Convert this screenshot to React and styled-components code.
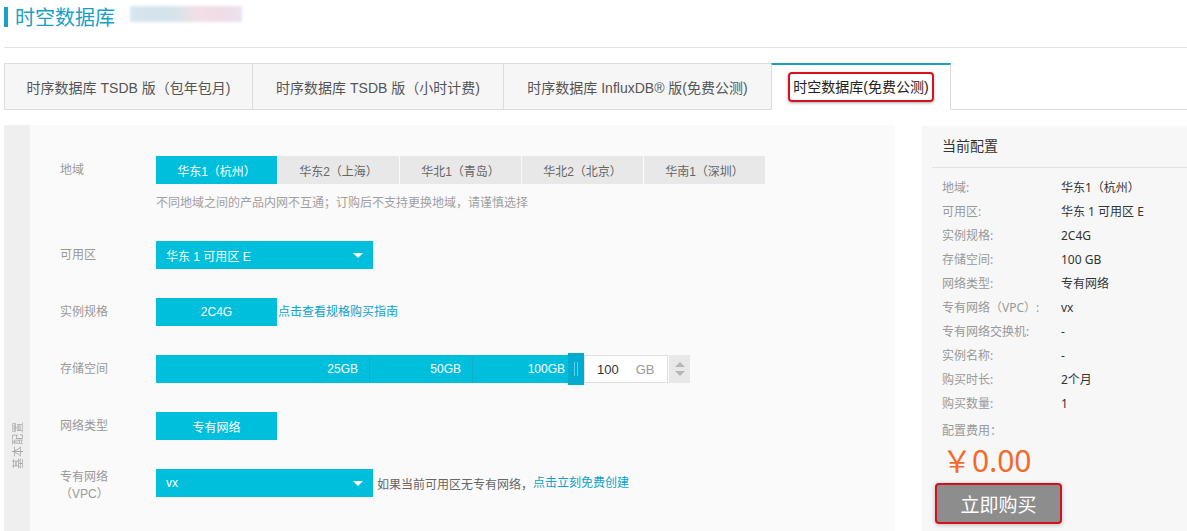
import React from 'react';
import styled, { createGlobalStyle } from 'styled-components';

const CYAN = '#00bfdc';
const TEAL = '#1a9fc6';
const LINK = '#0aa3cd';

const GlobalStyle = createGlobalStyle`
  html, body { margin: 0; padding: 0; background: #fff; }
  body {
    font-family: "Liberation Sans", "Noto Sans CJK SC", sans-serif;
    color: #333;
  }
  * { box-sizing: border-box; }
`;

const Page = styled.div`
  width: 1187px;
  height: 531px;
  overflow: hidden;
  padding-left: 4px;
`;

const Header = styled.div`
  height: 48px;
  border-bottom: 1px solid #e3e3e3;
  display: flex;
  align-items: flex-start;
  padding-top: 7px;
`;

const Title = styled.h1`
  margin: 0;
  font-size: 20px;
  font-weight: normal;
  line-height: 20px;
  color: ${TEAL};
  border-left: 4px solid ${TEAL};
  padding-left: 7px;
  font-family: "Noto Sans CJK SC", sans-serif;
`;

const Blurred = styled.div`
  width: 112px;
  height: 16px;
  margin: -1px 0 0 15px;
  background: linear-gradient(90deg, #d3e3ec 0%, #cfe0ea 30%, #d6e2e6 45%, #f2dbe4 60%, #efd9e3 80%, #e7e0ee 100%);
  filter: blur(1.5px);
  opacity: 0.9;
`;

const TabBar = styled.div`
  margin-top: 15px;
  height: 47px;
  display: flex;
  border-bottom: 1px solid #dcdcdc;
`;

const Tab = styled.div`
  width: ${p => p.$w}px;
  height: 47px;
  margin-left: ${p => (p.$first ? 0 : -1)}px;
  border: 1px solid #dcdcdc;
  border-top: ${p => (p.$active ? `2px solid ${TEAL}` : '1px solid #dcdcdc')};
  border-bottom: ${p => (p.$active ? '1px solid #fff' : '1px solid #dcdcdc')};
  background: ${p => (p.$active ? '#fff' : '#f6f6f6')};
  color: ${p => (p.$active ? '#222' : '#555')};
  font-size: 14px;
  display: flex;
  align-items: center;
  justify-content: center;
  position: relative;
  z-index: ${p => (p.$active ? 1 : 0)};
`;

const Marked = styled.span`
  border: 2px solid #d3121d;
  border-radius: 4px;
  padding: 4px 3px;
  line-height: 18px;
  box-shadow: 0 1px 3px rgba(0, 0, 0, 0.35);
`;

const Main = styled.div`
  margin-top: 15px;
  display: flex;
  align-items: flex-start;
  height: 406px;
`;

const LeftPanel = styled.div`
  width: 891px;
  height: 100%;
  display: flex;
  background: #fafafa;
`;

const Strip = styled.div`
  width: 26px;
  background: #efefef;
  display: flex;
  flex-direction: column;
  align-items: center;
  padding-top: 296px;
`;

const StripText = styled.span`
  writing-mode: vertical-rl;
  text-orientation: sideways;
  transform: rotate(180deg);
  font-size: 11px;
  letter-spacing: 1px;
  color: #a8a8a8;
  font-family: "Noto Sans CJK SC", sans-serif;
`;

const Form = styled.div`
  flex: 1;
  padding: 31px 0 0 30px;
  display: flex;
  flex-direction: column;
  gap: 29px;
`;

const Row = styled.div`
  display: flex;
  align-items: flex-start;
`;

const Label = styled.div`
  width: 96px;
  flex: none;
  font-size: 12px;
  color: #999;
  line-height: ${p => (p.$two ? '17px' : '28px')};
`;

const Control = styled.div`
  display: flex;
  flex-direction: column;
`;

const Inline = styled.div`
  display: flex;
  align-items: center;
  height: 28px;
`;

const Group = styled.div`
  display: flex;
  gap: 1px;
`;

const Choice = styled.div`
  width: ${p => p.$w || 121}px;
  height: 28px;
  display: flex;
  align-items: center;
  justify-content: center;
  font-size: 12px;
  background: ${p => (p.$active ? CYAN : '#e8e8e8')};
  color: ${p => (p.$active ? '#fff' : '#666')};
`;

const Hint = styled.div`
  margin-top: 10px;
  font-size: 12px;
  line-height: 18px;
  color: #a0a0a0;
`;

const Select = styled.div`
  width: 217px;
  height: 28px;
  background: ${CYAN};
  color: #fff;
  font-size: 12px;
  display: flex;
  align-items: center;
  justify-content: space-between;
  padding: 0 10px;
`;

const Caret = styled.span`
  width: 0;
  height: 0;
  border-left: 5px solid transparent;
  border-right: 5px solid transparent;
  border-top: 5px solid #fff;
`;

const Link = styled.span`
  font-size: 12px;
  color: ${LINK};
  line-height: 28px;
  margin-left: ${p => p.$ml || 0}px;
`;

const Note = styled.span`
  font-size: 12px;
  color: #666;
  margin-left: 4px;
`;

const Track = styled.div`
  display: flex;
  height: 28px;
  background: ${CYAN};
`;

const Segment = styled.div`
  width: ${p => p.$w}px;
  height: 100%;
  border-right: ${p => (p.$last ? 'none' : '1px solid #12abc9')};
  color: #fff;
  font-size: 12px;
  display: flex;
  align-items: center;
  justify-content: flex-end;
  padding-right: 11px;
`;

const Handle = styled.div`
  width: 16px;
  height: 32px;
  margin: -2px 0 -2px -8px;
  background: #00abd0;
  display: flex;
  align-items: center;
  justify-content: center;
  gap: 2px;
  position: relative;
  flex: none;
`;

const Grip = styled.span`
  width: 1px;
  height: 14px;
  background: #5fd3e8;
`;

const NumBox = styled.div`
  width: 84px;
  height: 28px;
  background: #fff;
  border: 1px solid #dedede;
  display: flex;
  align-items: center;
  padding-left: 12px;
  font-size: 13px;
  color: #333;
`;

const Unit = styled.span`
  margin-left: 17px;
  color: #999;
`;

const Spinner = styled.div`
  width: 21px;
  height: 28px;
  margin-left: 1px;
  background: #e8e8e8;
  display: flex;
  flex-direction: column;
  align-items: center;
  justify-content: center;
  gap: 4px;
`;

const Arrow = styled.span`
  width: 0;
  height: 0;
  border-left: 5px solid transparent;
  border-right: 5px solid transparent;
  ${p => (p.$up ? 'border-bottom: 5px solid #b5b5b5;' : 'border-top: 5px solid #b5b5b5;')}
`;

const RightPanel = styled.div`
  width: 265px;
  height: 100%;
  margin-left: 27px;
  margin-top: 1px;
  background: #f7f7f7;
`;

const PanelHead = styled.div`
  height: 42px;
  margin-left: 10px;
  padding-left: 10px;
  border-bottom: 1px solid #e2e2e2;
  font-size: 14px;
  line-height: 41px;
  color: #333;
`;

const PanelBody = styled.div`
  padding: 8px 0 0 20px;
  font-family: "Noto Sans", "Noto Sans CJK SC", sans-serif;
`;

const InfoRow = styled.div`
  display: flex;
  font-size: 12px;
  line-height: 24px;
`;

const InfoKey = styled.span`
  width: 119px;
  color: #999;
`;

const InfoVal = styled.span`
  color: #333;
`;

const FeeLabel = styled.div`
  margin-top: 3px;
  font-size: 12px;
  line-height: 24px;
  color: #999;
`;

const Price = styled.div`
  font-size: 30px;
  line-height: 36px;
  color: #f26a2d;
`;

const BuyButton = styled.button`
  margin: 6px 0 0 -5px;
  width: 123px;
  height: 37px;
  border: none;
  background: #8d8d8d;
  color: #fff;
  font-size: 19px;
  font-family: "Noto Sans CJK SC", sans-serif;
  box-shadow: 0 0 0 2px #d3121d, 0 1px 4px 2px rgba(0, 0, 0, 0.25);
  border-radius: 2px;
  padding: 0;
`;

const regions = ['华东1（杭州）', '华东2（上海）', '华北1（青岛）', '华北2（北京）', '华南1（深圳）'];

const info = [
  ['地域:', '华东1（杭州）'],
  ['可用区:', '华东 1 可用区 E'],
  ['实例规格:', '2C4G'],
  ['存储空间:', '100 GB'],
  ['网络类型:', '专有网络'],
  ['专有网络（VPC）:', 'vx'],
  ['专有网络交换机:', '-'],
  ['实例名称:', '-'],
  ['购买时长:', '2个月'],
  ['购买数量:', '1'],
];

export default function App() {
  return (
    <>
      <GlobalStyle />
      <Page>
        <Header>
          <Title>时空数据库</Title>
          <Blurred />
        </Header>

        <TabBar>
          <Tab $first $w={249}>时序数据库 TSDB 版（包年包月)</Tab>
          <Tab $w={252}>时序数据库 TSDB 版（小时计费)</Tab>
          <Tab $w={269}>时序数据库 InfluxDB® 版(免费公测)</Tab>
          <Tab $w={180} $active>
            <Marked>时空数据库(免费公测)</Marked>
          </Tab>
        </TabBar>

        <Main>
          <LeftPanel>
            <Strip>
              <StripText>基本配置</StripText>
            </Strip>
            <Form>
              <Row>
                <Label>地域</Label>
                <Control>
                  <Group>
                    {regions.map((r, i) => (
                      <Choice key={r} $active={i === 0}>{r}</Choice>
                    ))}
                  </Group>
                  <Hint>不同地域之间的产品内网不互通；订购后不支持更换地域，请谨慎选择</Hint>
                </Control>
              </Row>

              <Row>
                <Label>可用区</Label>
                <Select>
                  <span>华东 1 可用区 E</span>
                  <Caret />
                </Select>
              </Row>

              <Row>
                <Label>实例规格</Label>
                <Inline>
                  <Choice $active>2C4G</Choice>
                  <Link $ml={1}>点击查看规格购买指南</Link>
                </Inline>
              </Row>

              <Row>
                <Label>存储空间</Label>
                <Inline>
                  <Track>
                    <Segment $w={214}>25GB</Segment>
                    <Segment $w={103}>50GB</Segment>
                    <Segment $w={103} $last>100GB</Segment>
                  </Track>
                  <Handle>
                    <Grip />
                    <Grip />
                  </Handle>
                  <NumBox>
                    100<Unit>GB</Unit>
                  </NumBox>
                  <Spinner>
                    <Arrow $up />
                    <Arrow />
                  </Spinner>
                </Inline>
              </Row>

              <Row>
                <Label>网络类型</Label>
                <Choice $active>专有网络</Choice>
              </Row>

              <Row>
                <Label $two>专有网络<br />（VPC）</Label>
                <Inline>
                  <Select>
                    <span>vx</span>
                    <Caret />
                  </Select>
                  <Note>如果当前可用区无专有网络，</Note>
                  <Link>点击立刻免费创建</Link>
                </Inline>
              </Row>
            </Form>
          </LeftPanel>

          <RightPanel>
            <PanelHead>当前配置</PanelHead>
            <PanelBody>
              {info.map(([k, v]) => (
                <InfoRow key={k}>
                  <InfoKey>{k}</InfoKey>
                  <InfoVal>{v}</InfoVal>
                </InfoRow>
              ))}
              <FeeLabel>配置费用：</FeeLabel>
              <Price>￥0.00</Price>
              <BuyButton>立即购买</BuyButton>
            </PanelBody>
          </RightPanel>
        </Main>
      </Page>
    </>
  );
}
